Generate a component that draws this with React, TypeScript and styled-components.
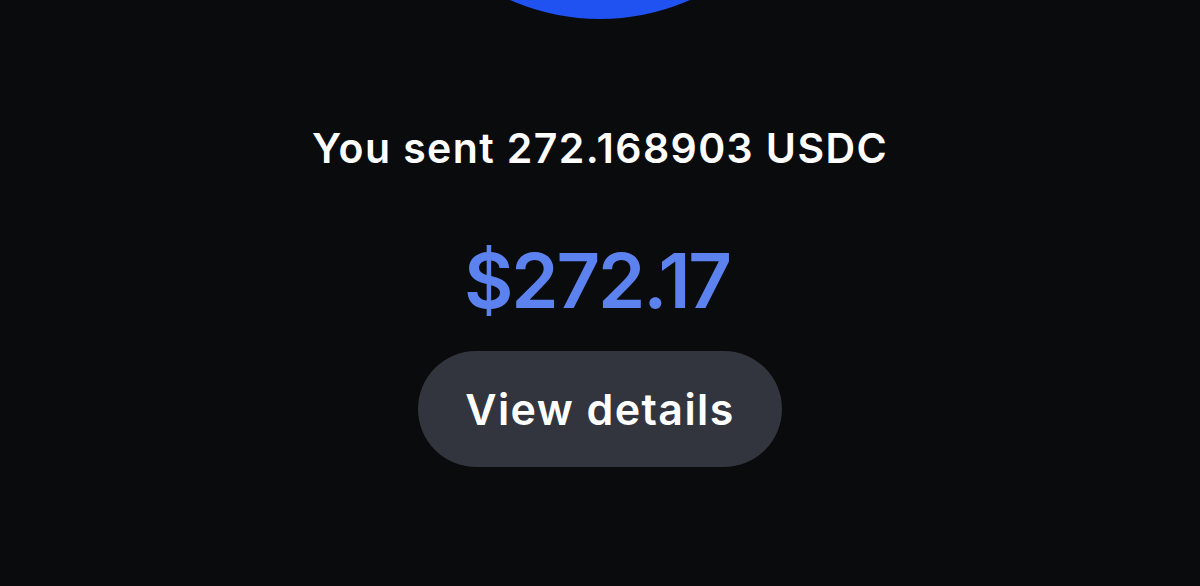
import React from "react";
import styled, { createGlobalStyle } from "styled-components";

const GlobalStyle = createGlobalStyle`
  html, body {
    margin: 0;
    padding: 0;
    background: #0a0b0d;
  }
  body {
    font-family: Inter, "Noto Sans", "Liberation Sans", sans-serif;
    -webkit-font-smoothing: antialiased;
  }
`;

const Screen = styled.div`
  width: 1200px;
  height: 586px;
  overflow: hidden;
  background: #0a0b0d;
  display: flex;
  flex-direction: column;
  align-items: center;
`;

const Badge = styled.div`
  width: 446px;
  height: 446px;
  margin-top: -427px;
  border-radius: 50%;
  background: #1f52f0;
  flex-shrink: 0;
`;

const Title = styled.h1`
  margin: 105px 0 0;
  font-size: 41px;
  line-height: 48px;
  font-weight: 600;
  color: #ffffff;
  letter-spacing: 1.4px;
`;

const Amount = styled.div`
  margin-top: 66px;
  padding-right: 6px;
  font-size: 76px;
  line-height: 84px;
  font-weight: 600;
  color: #5b82ee;
  letter-spacing: -2.2px;
`;

const DetailsButton = styled.button`
  margin-top: 29px;
  width: 364px;
  height: 116px;
  border: none;
  border-radius: 58px;
  background: #32353d;
  color: #ffffff;
  font-family: inherit;
  font-size: 43px;
  font-weight: 600;
  letter-spacing: 1.4px;
  cursor: pointer;
`;

const App: React.FC = () => {
  return (
    <>
      <GlobalStyle />
      <Screen>
        <Badge />
        <Title>You sent 272.168903 USDC</Title>
        <Amount>$272.17</Amount>
        <DetailsButton type="button">View details</DetailsButton>
      </Screen>
    </>
  );
};

export default App;
